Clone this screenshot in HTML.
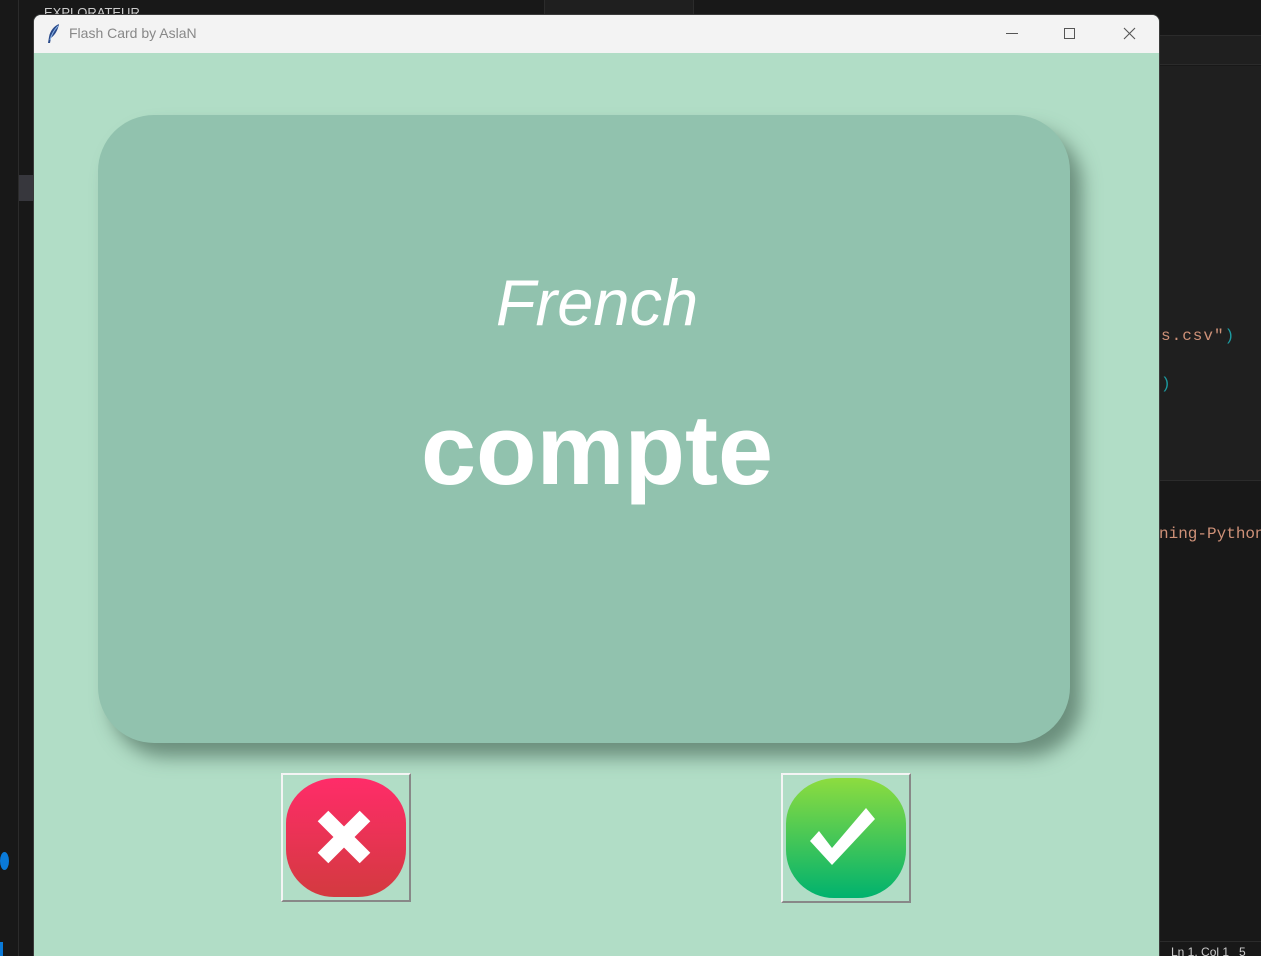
<!DOCTYPE html>
<html><head><meta charset="utf-8"><style>
*{margin:0;padding:0;box-sizing:border-box}
body{width:1261px;height:956px;background:#181818;position:relative;overflow:hidden;font-family:"Liberation Sans",sans-serif}
.abs{position:absolute}
</style></head><body>
<div class="abs" style="left:18px;top:0;width:1px;height:956px;background:#2b2b2b"></div>
<div class="abs" style="left:19px;top:175px;width:15px;height:26px;background:#37373d"></div>
<div class="abs" style="left:0px;top:852px;width:9px;height:18px;border-radius:50%;background:#0a7ad9"></div>
<div class="abs" style="left:0;top:942px;width:3px;height:14px;background:#0a7ad9"></div>
<div class="abs" style="left:44px;top:4px;font-size:13px;color:#ccc;height:11px;overflow:hidden;line-height:18px">EXPLORATEUR</div>
<div class="abs" style="left:544px;top:0;width:150px;height:15px;background:#1f1f1f;border-left:1px solid #2b2b2b;border-right:1px solid #2b2b2b"></div>
<div class="abs" style="left:1159px;top:35px;width:102px;height:30px;background:#1f1f1f;border-top:1px solid #2b2b2b;border-bottom:1px solid #2b2b2b"></div>
<div class="abs" style="left:1159px;top:66px;width:102px;height:414px;background:#1f1f1f"></div>
<div class="abs" style="left:1159px;top:480px;width:102px;height:1px;background:#2b2b2b"></div>
<div class="abs" style="left:1161px;top:327px;font-family:'Liberation Mono',monospace;font-size:16px;letter-spacing:1px;color:#ce9178;white-space:pre">s.csv"<span style="color:#1c9aa0">)</span></div>
<div class="abs" style="left:1161px;top:375px;font-family:'Liberation Mono',monospace;font-size:16px;color:#1c9aa0">)</div>
<div class="abs" style="left:1159px;top:525px;font-family:'Liberation Mono',monospace;font-size:16px;color:#ce9178;white-space:pre">ning-Python</div>
<div class="abs" style="left:1159px;top:941px;width:102px;height:15px;border-top:1px solid #2b2b2b;color:#ccc;font-size:12px;padding-left:12px;line-height:20px;overflow:hidden">Ln 1, Col 1&nbsp;&nbsp;&nbsp;5</div>

<div class="abs" style="left:34px;top:15px;width:1125px;height:941px;background:#b1ddc6;border-radius:7px 7px 0 0;overflow:hidden;box-shadow:0 0 0 1px #3a3a3a">
  <div class="abs" style="left:0;top:0;width:1125px;height:38px;background:#f3f3f3">
    <svg class="abs" style="left:12px;top:8px" width="16" height="22" viewBox="0 0 16 22"><path d="M13 1C8 3 4 8 3 14L2 20L4 20L5 15C9 12 12 7 13 1Z" fill="#2a4a8a"/><path d="M12 3C9 6 6 10 4 17" stroke="#8ab4e8" stroke-width="1" fill="none"/></svg>
    <div class="abs" style="left:35px;top:10px;font-size:14px;color:#888">Flash Card by AslaN</div>
    <div class="abs" style="left:972px;top:18px;width:12px;height:1px;background:#555"></div>
    <div class="abs" style="left:1030px;top:13px;width:11px;height:11px;border:1px solid #555"></div>
    <svg class="abs" style="left:1089px;top:12px" width="13" height="13"><path d="M1 1L12 12M12 1L1 12" stroke="#555" stroke-width="1.1"/></svg>
  </div>
  <div class="abs" style="left:64px;top:100px;width:972px;height:628px;background:#91c2ae;border-radius:56px;box-shadow:12px 14px 18px rgba(60,90,75,0.6)"></div>
  <div class="abs" style="left:77px;top:250px;width:972px;text-align:center;font-size:65px;font-style:italic;color:#fff">French</div>
  <div class="abs" style="left:77px;top:378px;width:972px;text-align:center;font-size:99px;font-weight:bold;color:#fff">compte</div>
  <div class="abs" style="left:247px;top:758px;width:130px;height:129px;border:2px solid;border-color:#f4f4f4 #888 #888 #f4f4f4">
    <div class="abs" style="left:3px;top:3px;width:120px;height:119px;border-radius:42% 42% 40% 40%/38% 38% 40% 40%;background:linear-gradient(#ff2c69,#d33a3f)"></div>
    <svg class="abs" style="left:32px;top:33px" width="58" height="58" viewBox="0 0 58 58"><path d="M8 8L50 50M50 8L8 50" stroke="#fff" stroke-width="15" stroke-linecap="butt"/></svg>
  </div>
  <div class="abs" style="left:747px;top:758px;width:130px;height:130px;border:2px solid;border-color:#f4f4f4 #888 #888 #f4f4f4">
    <div class="abs" style="left:3px;top:3px;width:120px;height:120px;border-radius:42% 42% 40% 40%/38% 38% 40% 40%;background:linear-gradient(#8ddc3f,#00b26e)"></div>
    <svg class="abs" style="left:27px;top:33px" width="70" height="62" viewBox="0 0 70 62"><path d="M0 33L9 23L22 40L56 0L65 11L22 57Z" fill="#fff"/></svg>
  </div>
</div>
</body></html>
